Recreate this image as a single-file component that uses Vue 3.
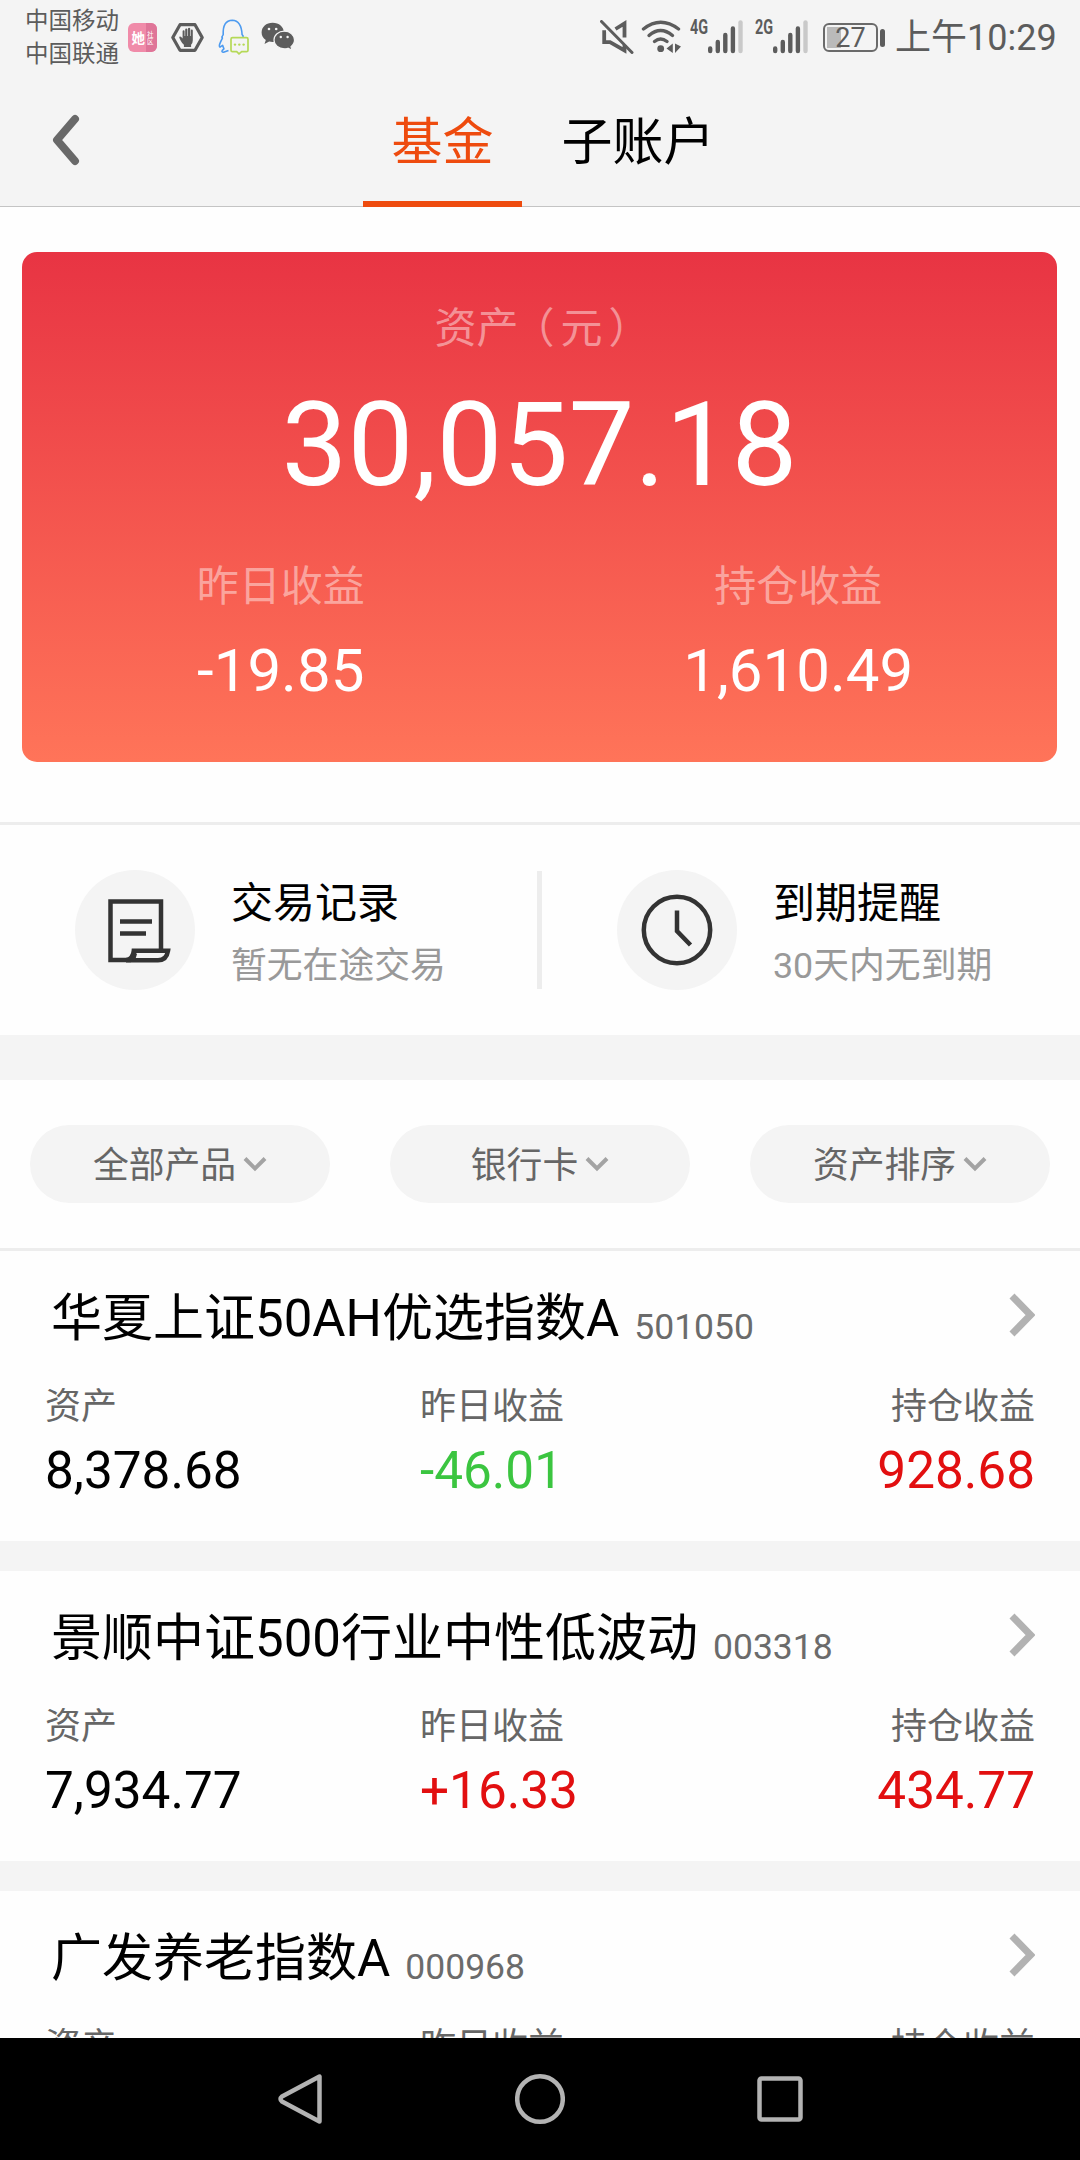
<!--
 * Fondos
 * -------------
 * Pantalla de fondos: resumen de la cartera, accesos, filtros y lista de productos
-->
<template>
    <div class="screen">
        <header class="status">
            <div class="carriers">
                <span>中国移动</span>
                <span>中国联通</span>
            </div>
            <svg class="ic-app" viewBox="0 0 29 29">
                <rect width="29" height="29" rx="6" fill="#f08ba9" />
                <path d="M18 0h5a6 6 0 0 1 6 6v17a6 6 0 0 1-6 6h-5z" fill="#df7598" />
                <text x="3.5" y="19.5" font-size="13.5" font-weight="700" fill="#fff">她</text>
                <text x="19" y="14" font-size="6.5" fill="#fff">社</text>
                <text x="19" y="20.5" font-size="6.5" fill="#fff">区</text>
            </svg>
            <svg class="ic-hand" viewBox="0 0 33 29">
                <path d="M9 1.7h15l7.2 12.8L24 27.3H9L1.8 14.5z" fill="none" stroke="#5c5c5c" stroke-width="3.2" stroke-linejoin="round" />
                <path d="M11.6 15.5V8.3q0-1 1-1t1 1V13h.6V6.4q0-1 1.1-1t1.1 1V13h.6V5.8q0-1 1.1-1t1.1 1V13h.6V7.4q0-1 1-1t1 1v9.8q0 2.8-1.7 4.6v2.2h-7.2v-2.2q-1.8-1.4-3.3-4.4l-1.3-2.6q-.3-1.2.8-1.3 1 0 2.5 2z" fill="#5c5c5c" />
            </svg>
            <svg class="ic-qq" viewBox="0 0 32 36">
                <path d="M11.5 31.5l-5 1.8q-2.3-.2-1.2-2l1.6-1.5-1.3-3.4-2.6 1.8q-1.5-1 .6-5.4l1.8-3.6q-1-1.6.8-3.5Q5.6 1.4 15.3 1.2q9 .2 9.8 14.5 1.4 1 1 3" fill="none" stroke="#4d9bf0" stroke-width="1.6" stroke-linejoin="round" />
                <path d="M15.5 18.7h14q1.5 0 1.5 1.5v11q0 1.5-1.5 1.5h-4.8L22 34.8l-2.3-2.1h-4.2q-1.5 0-1.5-1.5v-11q0-1.5 1.5-1.5z" fill="#f4f4f4" stroke="#b5d957" stroke-width="1.7" />
                <g fill="#b5d957">
                    <circle cx="18" cy="25.6" r="1.2" /><circle cx="22.3" cy="25.6" r="1.2" /><circle cx="26.6" cy="25.6" r="1.2" />
                </g>
            </svg>
            <svg class="ic-wechat" viewBox="0 0 34 30">
                <path d="M11.6.8C5.2.8.6 5 .6 10.4c0 3.2 1.5 5.8 4.2 7.6l-1.3 4 4.6-2.4c1.3.3 2.3.5 3.5.5 6.5 0 11.2-4.2 11.2-9.700S18.100.8 11.600.8z" fill="#5c5c5c" />
                <circle cx="8" cy="7" r="1.3" fill="#f4f4f4" /><circle cx="15.2" cy="7" r="1.3" fill="#f4f4f4" />
                <path d="M23.3 9.2c5.8 0 10.2 3.9 10.2 8.9 0 2.7-1.4 5-3.5 6.6l1 3.6-4-2.1c-1.2.4-2.4.6-3.7.6-5.8 0-10.3-3.8-10.3-8.7s4.5-8.9 10.3-8.9z" fill="#5c5c5c" stroke="#f4f4f4" stroke-width="1.2" />
                <circle cx="19.8" cy="15" r="1.2" fill="#f4f4f4" /><circle cx="26.6" cy="15" r="1.2" fill="#f4f4f4" />
            </svg>

            <svg class="ic-mute" viewBox="0 0 34 34">
                <path d="M6 12.2H4.2v10H10L24.5 30.5V25M15.5 9l9-5.5V17.5" fill="none" stroke="#5c5c5c" stroke-width="3.8" />
                <path d="M1.5 1.5l30.5 31" stroke="#5c5c5c" stroke-width="3" stroke-linecap="round" />
            </svg>
            <svg class="ic-wifi" viewBox="0 0 40 34">
                <g fill="none" stroke="#5c5c5c" stroke-width="3.4" stroke-linecap="round">
                    <path d="M2.5 9Q19.5-4.5 37.5 9" />
                    <path d="M8 15.5Q19.5 5.5 31.5 15.5" />
                    <path d="M13.5 21.5Q19.5 16.5 26 21.5" />
                </g>
                <circle cx="19.7" cy="28.7" r="3.4" fill="#5c5c5c" />
                <path d="M31.8 23.5v9.5l-6.3-4.5zM34 23.5v9.5l6-6.5z" fill="#5c5c5c" />
            </svg>
            <div class="signal" v-for="net in networks" :key="net">
                <span>{{ net }}</span>
                <svg viewBox="0 0 36 34">
                    <path d="M2.2 28.5v2.5M9.8 22v9M17.3 15v16M24.9 8.5V31" stroke="#5c5c5c" stroke-width="4.4" stroke-linecap="round" />
                    <path d="M32.5 2.5V31" stroke="#c9c9c9" stroke-width="4.4" stroke-linecap="round" />
                </svg>
            </div>
            <div class="battery"><span>27</span></div>
            <span class="time">上午10:29</span>
        </header>

        <nav class="tabs">
            <svg class="back" viewBox="0 0 28 52">
                <path d="M23 5L5 26l18 21" fill="none" stroke="#696969" stroke-width="8" stroke-linecap="round" stroke-linejoin="round" />
            </svg>
            <a v-for="tab in tabs" :key="tab" :class="{ active: tab === currentTab }" @click="currentTab = tab">{{ tab }}</a>
        </nav>

        <main>
            <section class="card">
                <p class="label">资产<span class="open">（</span>元<span class="close">）</span></p>
                <p class="total">30,057.18</p>
                <div class="profits">
                    <div v-for="item in profits" :key="item.label">
                        <p class="label">{{ item.label }}</p>
                        <p class="amount">{{ item.value }}</p>
                    </div>
                </div>
            </section>

            <section class="shortcuts">
                <div class="shortcut">
                    <div class="circle">
                        <svg viewBox="0 0 120 120">
                            <path d="M56 90H35.5V31.5H86V79" fill="none" stroke="#333" stroke-width="4.5" />
                            <path d="M45 51.5h32M45 63.5h26" stroke="#333" stroke-width="4.5" />
                            <path d="M51 90.2q7-1 7.8-9.4H93q-1.5 9.4-10 9.4z" fill="none" stroke="#333" stroke-width="4.5" />
                            <path d="M51 90.5q7-1 8-9.5l3 3-2 6.5z" fill="#333" />
                        </svg>
                    </div>
                    <div>
                        <h3>交易记录</h3>
                        <p>暂无在途交易</p>
                    </div>
                </div>
                <div class="divider"></div>
                <div class="shortcut">
                    <div class="circle">
                        <svg viewBox="0 0 120 120">
                            <circle cx="60" cy="60" r="33.2" fill="none" stroke="#333" stroke-width="4.5" />
                            <path d="M60 40.5V61l13.5 14" fill="none" stroke="#333" stroke-width="4.5" />
                        </svg>
                    </div>
                    <div>
                        <h3>到期提醒</h3>
                        <p>30天内无到期</p>
                    </div>
                </div>
            </section>

            <section class="filters">
                <button v-for="filter in filters" :key="filter">
                    <span>{{ filter }}</span>
                    <svg viewBox="0 0 24 16">
                        <path d="M2 2.5l10 10 10-10" fill="none" stroke="#a3a3a3" stroke-width="4" />
                    </svg>
                </button>
            </section>

            <!-- Lista de fondos -->
            <article v-for="fund in funds" :key="fund.code" class="fund">
                <div class="fund-head">
                    <h2>{{ fund.name }}</h2>
                    <span>{{ fund.code }}</span>
                    <svg viewBox="0 0 26 44">
                        <path d="M3 3l18.5 19L3 41" fill="none" stroke="#b2b2b2" stroke-width="7" />
                    </svg>
                </div>
                <dl>
                    <div>
                        <dt>资产</dt>
                        <dd>{{ fund.assets }}</dd>
                    </div>
                    <div>
                        <dt>昨日收益</dt>
                        <dd :class="trend(fund.daily)">{{ fund.daily }}</dd>
                    </div>
                    <div>
                        <dt>持仓收益</dt>
                        <dd :class="trend(fund.total)">{{ fund.total }}</dd>
                    </div>
                </dl>
            </article>
        </main>

        <footer>
            <svg viewBox="0 0 50 54">
                <path d="M44.5 4.5v45L7 29.5q-3-2.5 0-5z" fill="none" stroke="#b3b3b3" stroke-width="4.5" stroke-linejoin="round" />
            </svg>
            <svg viewBox="0 0 50 54">
                <circle cx="25" cy="27" r="22.8" fill="none" stroke="#b3b3b3" stroke-width="4.5" />
            </svg>
            <svg viewBox="0 0 50 54">
                <rect x="4.5" y="6.5" width="41" height="41" rx="2" fill="none" stroke="#b3b3b3" stroke-width="4.5" />
            </svg>
        </footer>
    </div>
</template>

<script setup>
    import { ref } from 'vue';

    const networks = ['4G', '2G'];
    const tabs = ['基金', '子账户'];
    const currentTab = ref('基金');

    const profits = [
        { label: '昨日收益', value: '-19.85' },
        { label: '持仓收益', value: '1,610.49' }
    ];

    const filters = ['全部产品', '银行卡', '资产排序'];

    const funds = [
        { name: '华夏上证50AH优选指数A', code: '501050', assets: '8,378.68', daily: '-46.01', total: '928.68' },
        { name: '景顺中证500行业中性低波动', code: '003318', assets: '7,934.77', daily: '+16.33', total: '434.77' },
        { name: '广发养老指数A', code: '000968', assets: '', daily: '', total: '' }
    ];

    // Rojo si sube, verde si baja
    const trend = (value) => value.startsWith('-') ? 'down' : 'up';
</script>

<style>
body {
  background: #fefefe;
}
</style>

<style scoped>
.screen {
  display: flex;
  flex-direction: column;
  width: 1080px;
  height: 2160px;
  overflow: hidden;
  font-family: Roboto, "Noto Sans CJK SC", sans-serif;
  color: #000;
}

svg {
  display: block;
  flex: none;
}

p, h2, h3, dl, dd {
  margin: 0;
  font-weight: 400;
}

.status {
  display: flex;
  align-items: center;
  flex: none;
  height: 74px;
  background: #f4f4f4;
  color: #5c5c5c;
}

.carriers {
  display: flex;
  flex-direction: column;
  width: 103px;
  padding: 2px 0 0 25px;
  font-size: 23.5px;
  line-height: 33px;
}

.ic-app {
  width: 29px;
  height: 29px;
}

.ic-hand {
  width: 33px;
  height: 29px;
  margin-left: 14px;
}

.ic-qq {
  width: 32px;
  height: 36px;
  margin-left: 13px;
}

.ic-wechat {
  width: 34px;
  height: 30px;
  margin-left: 12px;
}

.ic-mute {
  width: 34px;
  height: 34px;
  margin-left: auto;
}

.ic-wifi {
  width: 40px;
  height: 34px;
  margin: 0 9px 0 7px;
}

.signal {
  display: flex;
  width: 65px;
  height: 34px;
}

.signal span {
  width: 18px;
  font-size: 20px;
  font-weight: 700;
  line-height: 15px;
  transform: scaleX(.72);
  transform-origin: 0 0;
}

.signal svg {
  width: 36px;
  height: 34px;
}

.battery {
  position: relative;
  width: 55px;
  height: 29px;
  margin-left: 3px;
  box-sizing: border-box;
  border: 2px solid #6a6a6a;
  border-radius: 6px;
  background: linear-gradient(#bababa, #bababa) 2px 2px / 14px 21px no-repeat;
  font-size: 27px;
  line-height: 26px;
  text-align: center;
}

.battery::after {
  content: "";
  position: absolute;
  top: 4px;
  right: -9px;
  width: 5px;
  height: 18px;
  border-radius: 3px;
  background: #5c5c5c;
}

.time {
  width: 202px;
  padding: 2px 0 0 17px;
  box-sizing: border-box;
  font-size: 36px;
  line-height: 40px;
  white-space: nowrap;
}

.tabs {
  display: flex;
  flex: none;
  height: 132px;
  border-bottom: 1px solid #c4c4c4;
  background: #f4f4f4;
  font-size: 51px;
  line-height: 137px;
}

.tabs .back {
  width: 28px;
  height: 52px;
  margin: 40px 283px 0 52px;
}

.tabs a {
  height: 127px;
  padding: 0 28.5px;
  margin-right: 11px;
}

.tabs a.active {
  border-bottom: 6px solid #ee4b0e;
  color: #ee4b0e;
}

main {
  flex: 1;
  min-height: 0;
  overflow: hidden;
}

.card {
  height: 510px;
  margin: 45px 23px 60px 22px;
  padding-top: 50px;
  box-sizing: border-box;
  border-radius: 15px;
  background: linear-gradient(#e83443, #ff7459);
  color: #fff;
  text-align: center;
}

.label {
  font-size: 42px;
  line-height: 54px;
  color: rgba(255, 255, 255, .45);
}

/* Paréntesis algo separados del carácter central */
.open {
  margin: 0 6px 0 -6px;
}

.close {
  margin: 0 -6px 0 6px;
}

.total {
  padding-top: 19px;
  font-size: 117.4px;
  line-height: 140px;
}

.profits {
  display: grid;
  grid-template-columns: 1fr 1fr;
  padding-top: 45px;
}

.amount {
  padding-top: 20px;
  font-size: 60px;
  line-height: 74px;
}

.shortcuts {
  display: flex;
  height: 213px;
  padding: 45px 0 0 75px;
  box-sizing: border-box;
  border-top: 3px solid #ededed;
}

.shortcut {
  display: flex;
  width: 462px;
}

.circle {
  width: 120px;
  height: 120px;
  margin-right: 36px;
  border-radius: 50%;
  background: #f4f4f4;
}

.shortcut h3 {
  padding-top: 7px;
  font-size: 42px;
  line-height: 54px;
}

.shortcut p {
  padding-top: 12px;
  font-size: 35.8px;
  line-height: 46px;
  color: #999;
}

.divider {
  width: 5px;
  height: 118px;
  margin: 1px 75px 0 0;
  background: #ededed;
}

.filters {
  display: flex;
  gap: 60px;
  height: 216px;
  padding: 45px 30px;
  box-sizing: border-box;
  border-top: 45px solid #f4f4f4;
  border-bottom: 3px solid #ededed;
}

.filters button {
  display: flex;
  align-items: center;
  justify-content: center;
  width: 300px;
  height: 78px;
  padding: 0;
  border: none;
  border-radius: 39px;
  background: #f4f4f4;
  font-family: inherit;
  font-size: 35.8px;
  line-height: 50px;
  color: #666;
}

.filters span {
  padding-top: 4px;
}

.filters svg {
  width: 24px;
  height: 16px;
  margin: 0 0 1px 7px;
}

.fund {
  height: 320px;
  padding: 0 45px;
  box-sizing: border-box;
  border-bottom: 30px solid #f4f4f4;
}

.fund-head {
  display: flex;
  align-items: flex-start;
  height: 131px;
  padding-left: 6px;
}

.fund-head h2 {
  padding-top: 38px;
  font-size: 51px;
  line-height: 60px;
}

.fund-head span {
  padding: 53px 0 0 15px;
  font-size: 35.5px;
  line-height: 46px;
  color: #6b6b6b;
}

.fund-head svg {
  width: 26px;
  height: 44px;
  margin: 42px 0 0 auto;
}

.fund dl {
  display: flex;
}

.fund dl div {
  width: 375px;
}

.fund dl div:last-child {
  width: 240px;
  text-align: right;
}

.fund dt {
  font-size: 36px;
  line-height: 50px;
  color: #666;
}

.fund dd {
  padding-top: 9px;
  font-size: 51.3px;
  line-height: 60px;
}

.up {
  color: #e20f10;
}

.down {
  color: #3bc540;
}

footer {
  display: flex;
  justify-content: center;
  gap: 190px;
  flex: none;
  height: 122px;
  padding-top: 34px;
  box-sizing: border-box;
  background: #000;
}

footer svg {
  width: 50px;
  height: 54px;
}
</style>
